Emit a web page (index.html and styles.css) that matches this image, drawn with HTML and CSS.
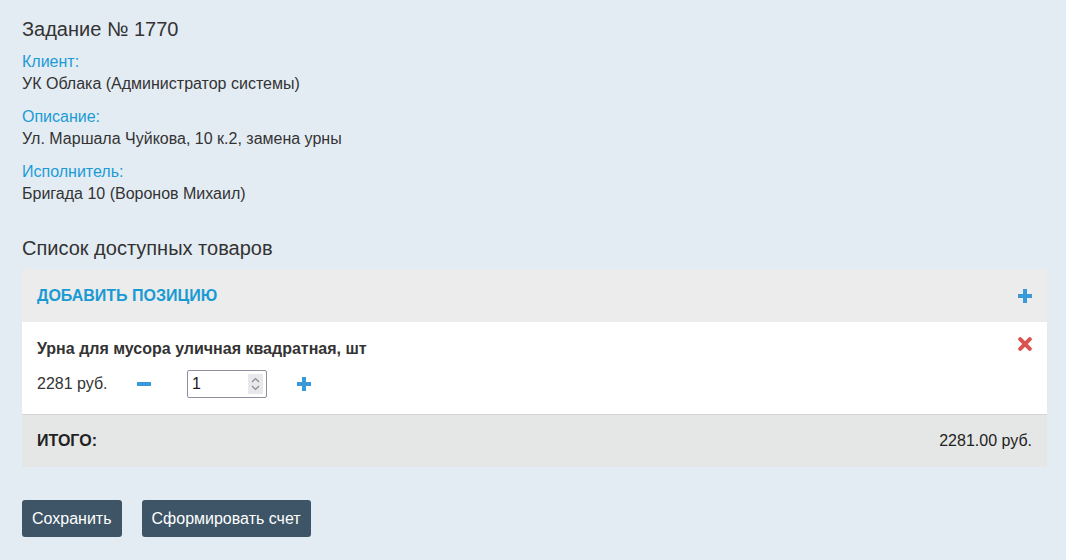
FILE: index.html
```html
<!DOCTYPE html>
<html lang="ru">
<head>
<meta charset="utf-8">
<title>Задание № 1770</title>
<link rel="stylesheet" href="styles.css">
</head>
<body>
<div class="page">
  <h1 class="title">Задание № 1770</h1>
  <div class="fields">
    <div class="field">
      <div class="label">Клиент:</div>
      <div class="value">УК Облака (Администратор системы)</div>
    </div>
    <div class="field">
      <div class="label">Описание:</div>
      <div class="value">Ул. Маршала Чуйкова, 10 к.2, замена урны</div>
    </div>
    <div class="field">
      <div class="label">Исполнитель:</div>
      <div class="value">Бригада 10 (Воронов Михаил)</div>
    </div>
  </div>
  <h2 class="section">Список доступных товаров</h2>
  <div class="panel">
    <div class="panel-head">
      <span class="add">Добавить позицию</span>
      <svg class="icon" width="14" height="14" viewBox="0 0 14 14"><path d="M5 0h4v5h5v4H9v5H5V9H0V5h5z" fill="#3a9ad9"/></svg>
    </div>
    <div class="item">
      <div class="item-top">
        <span class="item-name">Урна для мусора уличная квадратная, шт</span>
        <svg class="icon del" width="14" height="14" viewBox="0 0 14 14"><path d="M2.2 2.2L11.8 11.8M11.8 2.2L2.2 11.8" stroke="#d9534f" stroke-width="4" stroke-linecap="round"/></svg>
      </div>
      <div class="item-row">
        <span class="price">2281 руб.</span>
        <svg class="icon minus" width="14" height="4" viewBox="0 0 14 4"><rect width="14" height="4" fill="#3a9ad9"/></svg>
        <div class="qty">
          <input class="qty-input" type="text" value="1">
          <span class="spin"><svg width="9" height="14" viewBox="0 0 9 14"><path d="M1 5l3.5-3.5L8 5M1 9l3.5 3.5L8 9" fill="none" stroke="#8a8a8a" stroke-width="1.2"/></svg></span>
        </div>
        <svg class="icon plus" width="14" height="14" viewBox="0 0 14 14"><path d="M5 0h4v5h5v4H9v5H5V9H0V5h5z" fill="#3a9ad9"/></svg>
      </div>
    </div>
    <div class="total">
      <span class="total-label">Итого:</span>
      <span class="total-sum">2281.00 руб.</span>
    </div>
  </div>
  <div class="actions">
    <button class="btn">Сохранить</button>
    <button class="btn">Сформировать счет</button>
  </div>
</div>
</body>
</html>
```
FILE: styles.css
```css
* { box-sizing: border-box; }
body {
  margin: 0;
  background: #e4ecf3;
  font-family: "Liberation Sans", Arial, sans-serif;
  color: #333;
  font-size: 16px;
}
.page { padding: 16px 19px 0 22px; }
.title {
  font-size: 20px;
  font-weight: normal;
  line-height: 26px;
  margin: 0 0 9px;
  color: #333;
}
.fields { display: flex; flex-direction: column; gap: 11px; }
.label { color: #1a9bd7; line-height: 22px; }
.value { line-height: 22px; }
.section {
  font-size: 20px;
  font-weight: normal;
  line-height: 24px;
  margin: 31px 0 9px;
  color: #333;
}
.panel { background: #fff; }
.panel-head {
  background: #ececec;
  height: 53px;
  padding: 0 15px;
  display: flex;
  align-items: center;
  justify-content: space-between;
}
.add {
  text-transform: uppercase;
  font-weight: bold;
  color: #1a9ad3;
}
.icon { display: block; }
.item {
  padding: 17px 15px 16px;
  border-bottom: 1px solid #d4d4d4;
}
.item-top {
  display: flex;
  justify-content: space-between;
  align-items: flex-start;
}
.del { margin-top: -2px; }
.item-name { font-weight: bold; line-height: 20px; }
.item-row {
  display: flex;
  align-items: center;
  margin-top: 11px;
}
.price { width: 100px; }
.minus { margin-right: 36px; }
.qty {
  width: 80px;
  height: 28px;
  border: 1px solid #8f8f9d;
  border-radius: 2px;
  background: #fff;
  display: flex;
  align-items: center;
  padding: 0 3px 0 4px;
  margin-right: 30px;
}
.qty-input {
  border: 0;
  outline: 0;
  width: 50px;
  font: 16px "Liberation Sans", Arial, sans-serif;
  color: #222;
  padding: 0;
  background: transparent;
}
.spin {
  margin-left: auto;
  width: 15px;
  height: 20px;
  background: #e9e9ed;
  display: flex;
  align-items: center;
  justify-content: center;
}
.total {
  background: #e5e7e6;
  height: 52px;
  padding: 0 15px;
  display: flex;
  align-items: center;
  justify-content: space-between;
}
.total-label { text-transform: uppercase; font-weight: bold; color: #222; }
.total-sum { color: #222; }
.actions { display: flex; gap: 20px; margin-top: 33px; }
.btn {
  height: 37px;
  padding: 0 10px;
  background: #3d5566;
  color: #fff;
  border: 0;
  border-radius: 3px;
  font: 16px "Liberation Sans", Arial, sans-serif;
}
```
